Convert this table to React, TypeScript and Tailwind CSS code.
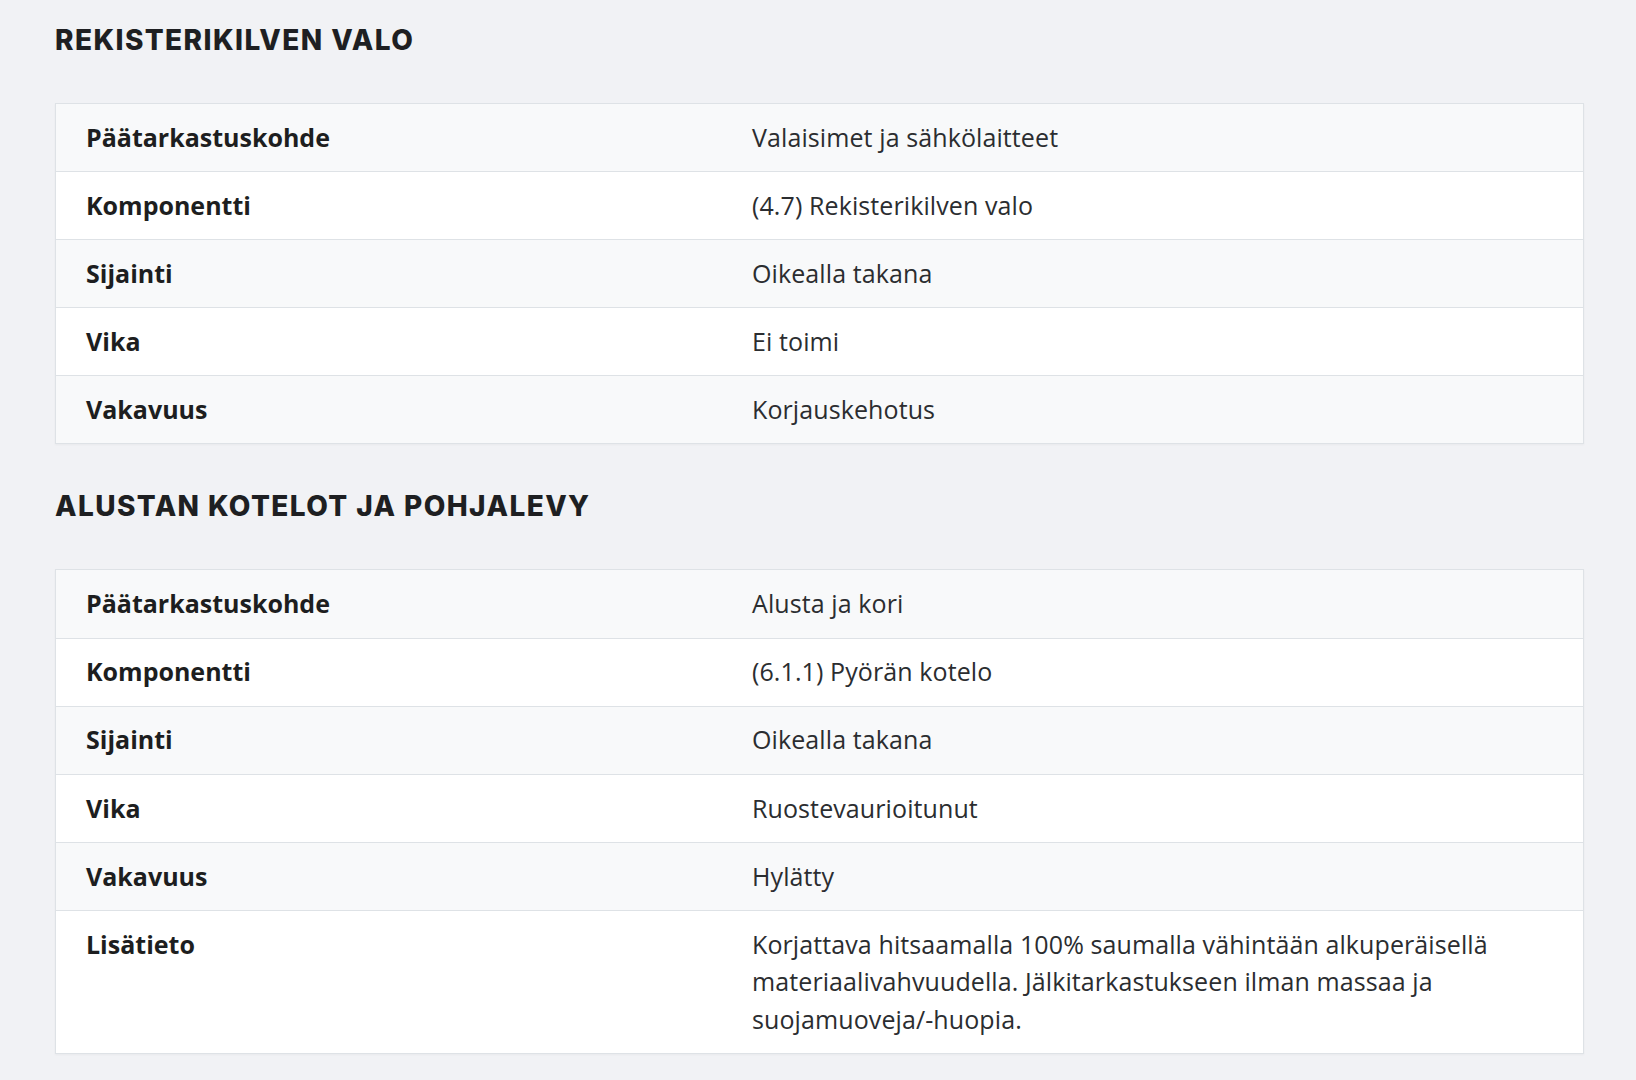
import React from "react";

type Row = { label: string; value: string };

const sections: { title: string; rows: Row[] }[] = [
  {
    title: "Rekisterikilven valo",
    rows: [
      { label: "Päätarkastuskohde", value: "Valaisimet ja sähkölaitteet" },
      { label: "Komponentti", value: "(4.7) Rekisterikilven valo" },
      { label: "Sijainti", value: "Oikealla takana" },
      { label: "Vika", value: "Ei toimi" },
      { label: "Vakavuus", value: "Korjauskehotus" },
    ],
  },
  {
    title: "Alustan kotelot ja pohjalevy",
    rows: [
      { label: "Päätarkastuskohde", value: "Alusta ja kori" },
      { label: "Komponentti", value: "(6.1.1) Pyörän kotelo" },
      { label: "Sijainti", value: "Oikealla takana" },
      { label: "Vika", value: "Ruostevaurioitunut" },
      { label: "Vakavuus", value: "Hylätty" },
      {
        label: "Lisätieto",
        value:
          "Korjattava hitsaamalla 100% saumalla vähintään alkuperäisellä materiaalivahvuudella. Jälkitarkastukseen ilman massaa ja suojamuoveja/-huopia.",
      },
    ],
  },
];

export default function App() {
  return (
    <div
      className="min-h-[1080px] bg-[#f1f2f5] pl-[55px] pr-[52px] pt-[22px] pb-[24px] text-[#212529]"
      style={{ fontFamily: '"Open Sans", "Noto Sans", sans-serif' }}
    >
      {sections.map((s, si) => (
        <section key={si} className={si === 0 ? "" : "mt-[44px]"}>
          <h2
            className="text-[28px] leading-[36px] font-extrabold uppercase tracking-[1.4px] text-[#1e1f22] mb-[45px]"
            style={{ fontFamily: 'Inter, "DejaVu Sans", sans-serif' }}
          >
            {s.title}
          </h2>
          <div className="border border-[#dee2e6] bg-white shadow-[0_1px_2px_rgba(0,0,0,0.04)]">
            {s.rows.map((r, ri) => (
              <div
                key={ri}
                className={`flex ${ri === 0 ? "" : "border-t border-[#dee2e6]"} ${
                  ri % 2 === 0 ? "bg-[#f8f9fa]" : "bg-white"
                }`}
              >
                <div className="w-[666px] shrink-0 pl-[30px] pr-4 py-[14.8px] text-[25px] leading-[37.5px] font-bold text-[#1d1e20]">
                  {r.label}
                </div>
                <div className="flex-1 pl-[30px] pr-[60px] py-[14.8px] text-[25px] leading-[37.5px] tracking-[0.1px] text-[#2b2d30]">
                  {r.value}
                </div>
              </div>
            ))}
          </div>
        </section>
      ))}
    </div>
  );
}
